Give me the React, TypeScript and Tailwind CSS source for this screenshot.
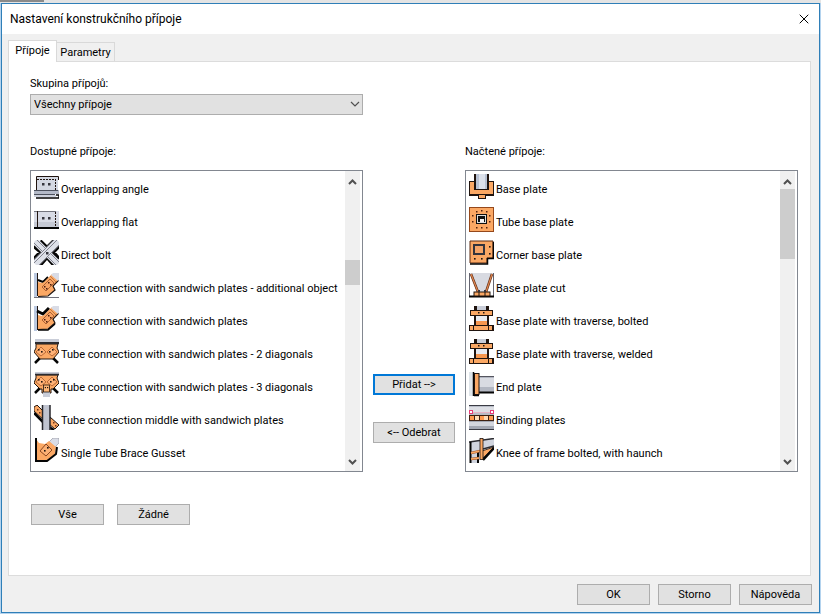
import { ReactNode } from 'react';
import { X } from 'lucide-react';

const ORANGE = '#fba864';
const DARK = '#20140f';
const STEEL = '#c9cdd8';

interface Item {
  name: string;
  icon: ReactNode;
}

const bolts = (points: number[][], color = DARK, size = 2) =>
  points.map(([x, y]) => <rect key={`${x}-${y}`} x={x} y={y} width={size} height={size} fill={color} />);

const sandwichPlate = (
  <>
    <path d="M4 9 L8 10 L10 9 L18 1 L25 7 L19 13 L21 17 L13 23 L4 23 Z" fill={ORANGE} />
    <path d="M25 7 L19 13 L21 17 L14 23 L4 23.5" fill="none" stroke={DARK} strokeWidth="1.2" />
    <path d="M17 2 L19 0 H25 V7 L24 8 Z" fill="#d9dce6" />
    <path d="M16 3 L22 9" stroke="#b06a3a" strokeWidth="0.8" />
    <path d="M8 14 L16 6 L20 10 L12 18 Z" fill="#f8a466" stroke="#8c4520" strokeWidth="0.7" />
    {bolts([[10, 13], [12, 15], [14, 9], [16, 11]], '#4a1c0c', 1.5)}
  </>
);

const traverse = (
  <>
    <rect x="5" y="0" width="15" height="4" fill={DARK} />
    <rect x="8" y="0" width="9" height="4" fill={STEEL} />
    <rect x="5" y="9" width="15" height="11" fill={DARK} />
    <rect x="7" y="10" width="11" height="5" fill="#e8eaf0" />
    <rect x="7" y="15" width="11" height="5" fill="#f7974f" />
    <rect x="1" y="4" width="23" height="6" fill={DARK} />
    <rect x="2" y="5" width="21" height="4" fill={ORANGE} />
    {bolts([[9, 6], [14, 6]], DARK, 1.5)}
    <rect x="0" y="19" width="25" height="6" fill={DARK} />
    <rect x="1" y="20" width="3" height="4" fill={ORANGE} />
    <rect x="5" y="20" width="14" height="4" fill={ORANGE} />
    <rect x="20" y="20" width="3" height="4" fill={ORANGE} />
  </>
);

const available: Item[] = [
  {
    name: 'Overlapping angle',
    icon: (
      <>
        <rect x="2" y="2" width="22" height="15" fill="#d4d8e2" />
        <path d="M2.5 17 V2.5 H24.5 V6" fill="none" stroke={DARK} />
        <path d="M3 5.5 H21" stroke={DARK} strokeDasharray="2 1" />
        <path d="M21.5 5 V17" stroke={DARK} strokeDasharray="2 1" />
        {bolts([[8, 9], [14, 9]], '#35353d', 2.5)}
        <rect x="0" y="16" width="25" height="4" fill="#b4bac8" />
        <path d="M0 16.5 H24 M0 20.5 H21" stroke="#4b505c" />
        <rect x="0" y="21" width="22" height="2" fill="#cdd1dc" />
        <path d="M22 21 H25 V24 H2" fill="none" stroke="#050505" strokeWidth="1.5" />
      </>
    ),
  },
  {
    name: 'Overlapping flat',
    icon: (
      <>
        <rect x="0" y="4" width="25" height="17" fill="#d8dbe5" />
        <rect x="0" y="15" width="25" height="5" fill="#c5c9d4" />
        <path d="M0 4.5 H22" stroke="#73747d" />
        <path d="M3.5 4 V20" stroke={DARK} />
        <path d="M21.5 5 V20" stroke={DARK} strokeDasharray="2 1" />
        {bolts([[8, 10], [14, 10]], '#35353d', 2.5)}
        <rect x="0" y="20" width="25" height="2" fill="#050505" />
      </>
    ),
  },
  {
    name: 'Direct bolt',
    icon: (
      <>
        <path d="M6 1 L13 8 L20 1 M0 6 L7 12 L0 19 M25 6 L19 12 L25 19 M6 25 L13 17 L20 25" fill="none" stroke="#050505" strokeWidth="4" />
        <path d="M1 1 L24 24" stroke="#dde0e8" strokeWidth="7" />
        <path d="M3 0 L25 22 M0 3 L22 25" stroke="#6b6b76" strokeWidth="0.8" />
        <path d="M24 1 L1 24" stroke="#dde0e8" strokeWidth="8" />
        <path d="M20 0 L0 20 M25 5 L5 25 M23 0 L0 23" stroke="#6b6b76" strokeWidth="0.8" />
        {bolts([[12, 12]], '#35353d', 2.5)}
      </>
    ),
  },
  {
    name: 'Tube connection with sandwich plates - additional object',
    icon: (
      <>
        <rect x="0" y="0" width="3" height="24" fill="#bac8e0" />
        <path d="M3.5 0 V23" stroke={DARK} />
        <path d="M4 7 L9 9 L14 4" fill="none" stroke="#050505" strokeWidth="2" />
        {sandwichPlate}
        <path d="M0 24.5 H25" stroke="#70707a" />
      </>
    ),
  },
  {
    name: 'Tube connection with sandwich plates',
    icon: (
      <>
        <rect x="0" y="0" width="3" height="25" fill="#bac8e0" />
        <path d="M3.5 0 V24" stroke={DARK} />
        <path d="M3 5 L9 8 L15 2" fill="none" stroke="#050505" strokeWidth="3" />
        {sandwichPlate}
        <path d="M4 24 H14 L21 18" fill="none" stroke="#050505" strokeWidth="1.5" />
      </>
    ),
  },
  {
    name: 'Tube connection with sandwich plates - 2 diagonals',
    icon: (
      <>
        <rect x="1" y="0" width="24" height="3" fill={STEEL} />
        <path d="M6 19 L1 24 M19 19 L24 24" stroke="#050505" strokeWidth="2.5" />
        <path d="M2 5 H24 L23 9 L25 13 L19 20 H6 L0 13 L2 9 Z" fill={ORANGE} stroke={DARK} />
        <path d="M1 4 H25" stroke="#2b2b30" strokeWidth="2" />
        <path d="M7 8 L12 13 L7 17 L2 13 Z M18 8 L13 13 L18 17 L23 13 Z" fill="#ffb277" stroke="#a8592b" strokeWidth="0.8" />
        {bolts([[4, 10], [7, 12], [18, 10], [15, 12]], DARK, 1.6)}
      </>
    ),
  },
  {
    name: 'Tube connection with sandwich plates - 3 diagonals',
    icon: (
      <>
        <rect x="1" y="0" width="24" height="2" fill={STEEL} />
        <path d="M6 16 L1 21 M19 16 L24 21" stroke="#050505" strokeWidth="2.5" />
        <path d="M2 3 H24 L23 6 L25 11 L19 17 H17 V21 H8 V17 H6 L0 11 L2 6 Z" fill={ORANGE} stroke={DARK} />
        <rect x="9" y="20" width="7" height="5" fill={STEEL} />
        <path d="M1 2.5 H25" stroke="#2b2b30" strokeWidth="1.5" />
        <path d="M7 5 L12 10 L7 14 L2 10 Z M18 5 L13 10 L18 14 L23 10 Z" fill="#ffb277" stroke="#a8592b" strokeWidth="0.8" />
        <rect x="9.5" y="13" width="6" height="7" fill="#ffb777" stroke={DARK} strokeWidth="0.8" />
        {bolts([[4, 7], [19, 7], [7, 9], [16, 9]], DARK, 1.6)}
        {bolts([[10.8, 15], [13, 15]], DARK, 1.2)}
      </>
    ),
  },
  {
    name: 'Tube connection middle with sandwich plates',
    icon: (
      <>
        <path d="M0 8 L9 17 M15 22 L20 25" stroke="#050505" strokeWidth="2.5" />
        <path d="M0 2 L3 0 L12 9 V17 L0 6 Z M16 12 L25 20 L21 24 L15 19 Z" fill={ORANGE} stroke={DARK} />
        {bolts([[3, 4], [5, 7], [19, 17], [21, 20]], '#74351b', 1.5)}
        <rect x="8" y="0" width="8" height="25" fill="#c0c4d0" />
        <path d="M8.5 0 V25" stroke="#26262b" strokeWidth="1.5" />
        <path d="M16 0 V25" stroke="#26262b" strokeWidth="1.5" />
      </>
    ),
  },
  {
    name: 'Single Tube Brace Gusset',
    icon: (
      <>
        <path d="M14 5 L19 0 H25 V5 L20 10 Z" fill="#d9dce6" stroke="#8a8c96" strokeWidth="0.6" />
        <path d="M2 1 L5 5 L11 6 L15 3 L22 9 L21 16 L13 22 H2 Z" fill={ORANGE} />
        <path d="M2 0 V23 H13 L22 16 L23 9" fill="none" stroke="#050505" strokeWidth="2" />
        <path d="M12 6 L18 12 L12 18 L6 13 Z" fill="#fcb074" stroke="#7c3b18" strokeWidth="0.9" />
        {bolts([[10, 12], [13, 9]], DARK, 1.6)}
      </>
    ),
  },
];

const loaded: Item[] = [
  {
    name: 'Base plate',
    icon: (
      <>
        <rect x="0" y="7" width="25" height="15" fill={DARK} />
        <rect x="1" y="8" width="4" height="8" fill={ORANGE} />
        <rect x="20" y="8" width="4" height="8" fill={ORANGE} />
        <rect x="5" y="0" width="15" height="16" fill={DARK} />
        <rect x="7" y="0" width="11" height="15" fill="#b9c2d3" />
        <rect x="10" y="0" width="6" height="15" fill="#dce1eb" />
        <rect x="1" y="16" width="23" height="4" fill={ORANGE} />
        <rect x="9.5" y="20.5" width="7" height="4" fill={ORANGE} stroke={DARK} />
      </>
    ),
  },
  {
    name: 'Tube base plate',
    icon: (
      <>
        <rect x="0.5" y="0.5" width="24" height="24" fill={ORANGE} stroke="#95481b" />
        <rect x="7" y="7" width="11" height="10" fill="#111111" />
        <rect x="8.5" y="8.5" width="8" height="7" fill="none" stroke="#dddddd" />
        <rect x="11" y="12" width="4" height="3" fill="#f4f4f4" />
        {bolts([[7, 4], [12, 3], [17, 4], [3, 8], [3, 14], [20, 8], [20, 14], [7, 20], [12, 20], [17, 20]], '#54220d', 1.5)}
      </>
    ),
  },
  {
    name: 'Corner base plate',
    icon: (
      <>
        <path d="M1 1 H24 V18 H18 V23 H1 Z" fill={ORANGE} stroke="#5a2a12" />
        <path d="M24.5 2 V18.5 H18.5 V24 H1" fill="none" stroke="#050505" strokeWidth="1.5" />
        <rect x="5" y="5" width="10" height="9" fill="#f5a467" stroke="#34343c" strokeWidth="2" />
        {bolts([[20, 6], [20, 13], [5, 18], [12, 18]], DARK, 1.6)}
      </>
    ),
  },
  {
    name: 'Base plate cut',
    icon: (
      <>
        <path d="M1 0 H24 L18 19 H8 Z" fill="#d8dae1" />
        <path d="M0.5 0 V24 M24.5 0 V24" stroke="#656570" />
        <path d="M2 1 L9 19 M23 1 L17 19" stroke="#633017" strokeWidth="2.5" />
        <path d="M2 1 L9 19 M23 1 L17 19" stroke="#df8650" strokeWidth="1.2" />
        <path d="M0 23.5 H25" stroke="#050505" strokeWidth="2" />
        <rect x="5" y="19" width="16" height="4" fill={ORANGE} stroke={DARK} />
        {bolts([[9, 17], [15, 17]], '#35353d')}
        <path d="M10 19 V23 M16 19 V23" stroke={DARK} />
      </>
    ),
  },
  { name: 'Base plate with traverse, bolted', icon: traverse },
  { name: 'Base plate with traverse, welded', icon: traverse },
  {
    name: 'End plate',
    icon: (
      <>
        <rect x="0" y="0" width="4" height="24" fill="#dfe5ea" />
        <path d="M4.5 0 V24" stroke="#050505" strokeWidth="1.5" />
        <rect x="10" y="4" width="15" height="16" fill="#b3b7c2" />
        <rect x="10" y="6" width="15" height="9" fill="#d9dbe2" />
        <path d="M10 4.5 H25" stroke="#55555f" />
        <path d="M10 20.5 H25" stroke="#050505" strokeWidth="2" />
        <rect x="5.5" y="1.5" width="4.5" height="21" fill={ORANGE} stroke={DARK} />
        <path d="M5 23.5 H10" stroke="#050505" strokeWidth="1.5" />
      </>
    ),
  },
  {
    name: 'Binding plates',
    icon: (
      <>
        <rect x="0" y="0" width="25" height="10" fill="#b9bdc7" />
        <rect x="0" y="2" width="25" height="6" fill="#dddfe5" />
        <rect x="0" y="16" width="25" height="9" fill="#a3a8b4" />
        <rect x="0" y="17" width="25" height="4" fill="#d3d6de" />
        <path d="M0 0.5 H25 M0 24.5 H25" stroke="#3a3b44" />
        <rect x="0" y="10" width="25" height="6" fill="#3d2112" />
        {[1, 6, 11, 15, 20].map((x, i) => (
          <rect key={x} x={x} y="11" width="4" height="4" fill={i % 2 ? '#ffdcb6' : '#ff9b50'} />
        ))}
        <path d="M4 7.5 H21" stroke="#e9a8bd" strokeWidth="0.8" />
        <rect x="0.5" y="5.5" width="3" height="3" fill="#ffffff" stroke="#e83d78" />
        <rect x="21.5" y="5.5" width="3" height="3" fill="#ffffff" stroke="#e83d78" />
      </>
    ),
  },
  {
    name: 'Knee of frame bolted, with haunch',
    icon: (
      <>
        <path d="M1 4 L25 0 V9 L11 12 L10 25 H1 Z" fill="#d0d4de" />
        <path d="M0 4 L25 0.5 M14 11 L25 8" stroke="#2b2b30" strokeWidth="1.5" />
        <path d="M1.5 4 V25 M9 14 V25" stroke="#050505" strokeWidth="2" />
        <path d="M2 15 L11 13 M2 21 L10 20" stroke="#98512a" strokeWidth="2.5" />
        <path d="M2 15 L11 13 M2 21 L10 20" stroke={ORANGE} strokeWidth="1.5" />
        <path d="M13 13 L25 9 L14 20 Z" fill={ORANGE} stroke={DARK} strokeWidth="0.8" />
        <path d="M25 10 L14 22" stroke="#050505" strokeWidth="2.5" />
        <rect x="11" y="0.5" width="3" height="21" fill={ORANGE} stroke={DARK} strokeWidth="0.8" />
      </>
    ),
  },
];

const Chevron = ({ up = false }: { up?: boolean }) => (
  <svg className="w-[9px] h-[6px]" viewBox="0 0 9 6" fill="none" stroke="#505050" strokeWidth="2">
    <path d={up ? 'M1 5 L4.5 1.5 L8 5' : 'M1 1 L4.5 4.5 L8 1'} />
  </svg>
);

interface ScrollBarProps {
  offset: string;
  thumb: string;
}

const ScrollBar = ({ offset, thumb }: ScrollBarProps) => (
  <div className="w-[15px] mr-[2px] shrink-0 bg-[#f0f0f0] flex flex-col">
    <button type="button" aria-label="Nahoru" className="h-[18px] shrink-0 pt-1 flex items-center justify-center">
      <Chevron up />
    </button>
    <div className={`flex-1 ${offset}`}>
      <div className={`bg-[#cdcdcd] ${thumb}`} />
    </div>
    <button type="button" aria-label="Dolů" className="h-[18px] shrink-0 flex items-center justify-center">
      <Chevron />
    </button>
  </div>
);

interface ListProps extends ScrollBarProps {
  label: string;
  items: Item[];
}

const ConnectionList = ({ label, items, offset, thumb }: ListProps) => (
  <section className="flex-1 min-w-0">
    <h2 className="h-[18px] leading-[18px] mb-[9px]">{label}</h2>
    <div className="h-[302px] border border-[#828790] bg-white flex">
      <ul role="listbox" aria-label={label} className="flex-1 min-w-0 overflow-hidden pt-[3px] pl-[3px]">
        {items.map((item) => (
          <li key={item.name} role="option" aria-selected={false} className="h-[33px] flex items-start gap-[2px] whitespace-nowrap">
            <svg className="w-[25px] h-[25px] shrink-0" viewBox="0 0 25 25">
              {item.icon}
            </svg>
            <span className="leading-[32px]">{item.name}</span>
          </li>
        ))}
      </ul>
      <ScrollBar offset={offset} thumb={thumb} />
    </div>
  </section>
);

interface ButtonProps {
  children: ReactNode;
  primary?: boolean;
  wide?: boolean;
}

const DialogButton = ({ children, primary, wide }: ButtonProps) => (
  <button
    type="button"
    className={`h-[21px] pt-[2px] bg-[#e1e1e1] flex items-center justify-center whitespace-nowrap ${wide ? 'w-[82px]' : 'w-[73px]'} ${
      primary ? 'border-2 border-[#0078d7]' : 'border border-[#adadad]'
    }`}
  >
    {children}
  </button>
);

export default function App() {
  return (
    <div className="min-h-screen flex flex-col bg-[#b4d3ee] font-[Roboto,sans-serif] text-[11px] text-black">
      <div className="h-[3px] shrink-0 bg-[#e4e4e4]">
        <div className="w-[44px] h-[2px] bg-[#8a8a8a]" />
      </div>
      <main className="flex-1 ml-px mr-px mb-px border border-[#2f7fb8] bg-[#f0f0f0] flex flex-col">
        <header className="h-[30px] shrink-0 bg-white flex items-center justify-between pl-2 pr-[7px]">
          <h1 className="text-[12px]">Nastavení konstrukčního přípoje</h1>
          <button type="button" aria-label="Zavřít">
            <X className="w-4 h-4" strokeWidth={1.5} />
          </button>
        </header>

        <div className="flex-1 flex flex-col pt-[6px] pl-[6px] pr-[7px]">
          <div role="tablist" className="flex items-end">
            <button type="button" role="tab" aria-selected className="relative z-10 -mb-px h-[22px] w-[49px] border border-b-0 border-[#d9d9d9] bg-white text-center">
              Přípoje
            </button>
            <button type="button" role="tab" aria-selected={false} className="h-[19px] w-[58px] pt-[2px] border border-l-0 border-b-0 border-[#d9d9d9] text-center">
              Parametry
            </button>
          </div>

          <div role="tabpanel" className="flex-1 mr-px border border-[#dcdcdc] bg-white pt-[13px] pl-[21px] pr-[12px] pb-6">
            <div className="flex gap-[102px]">
              <div className="flex-1 min-w-0">
                <label htmlFor="group" className="block h-[18px] leading-[18px] mb-px">
                  Skupina přípojů:
                </label>
                <div className="relative">
                  <select id="group" className="block w-full h-[21px] appearance-none border border-[#adadad] bg-[#e1e1e1] pt-[2px] pl-[3px]">
                    <option>Všechny přípoje</option>
                  </select>
                  <svg className="absolute right-[3px] top-[7px] w-[10px] h-[7px] pointer-events-none" viewBox="0 0 10 7" fill="none" stroke="#505050" strokeWidth="1.2">
                    <path d="M1 1 L5 5 L9 1" />
                  </svg>
                </div>
              </div>
              <div className="flex-1" />
            </div>

            <div className="mt-7 flex gap-[10px]">
              <ConnectionList label="Dostupné přípoje:" items={available} offset="pt-[71px]" thumb="h-[25px]" />
              <div className="shrink-0 flex flex-col gap-[27px] pt-[231px]">
                <DialogButton primary wide>Přidat --&gt;</DialogButton>
                <DialogButton wide>&lt;-- Odebrat</DialogButton>
              </div>
              <ConnectionList label="Načtené přípoje:" items={loaded} offset="pt-0" thumb="h-[70px]" />
            </div>

            <div className="mt-8 pl-px flex gap-[13px]">
              <DialogButton>Vše</DialogButton>
              <DialogButton>Žádné</DialogButton>
            </div>
          </div>

          <footer className="flex justify-end gap-2 pt-2 pb-[7px]">
            <DialogButton>OK</DialogButton>
            <DialogButton>Storno</DialogButton>
            <DialogButton>Nápověda</DialogButton>
          </footer>
        </div>
      </main>
    </div>
  );
}
